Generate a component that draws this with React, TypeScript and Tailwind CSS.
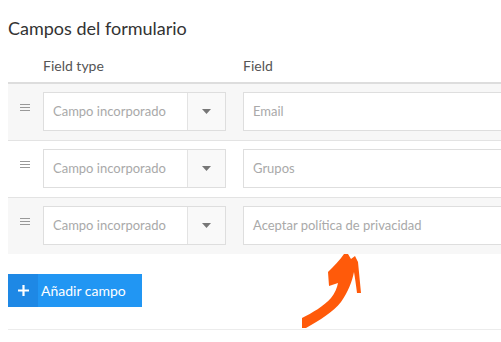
const FONT = { fontFamily: 'Lato, "Noto Sans", sans-serif' };

const rows = [
  { field: "Email", striped: true },
  { field: "Grupos", striped: false },
  { field: "Aceptar política de privacidad", striped: true },
];

function DragHandle() {
  return (
    <div className="flex w-[35px] shrink-0 justify-center pt-[12px] pr-[2px]">
      <div className="flex w-[10px] flex-col gap-[2px]">
        <span className="h-px bg-[#999]" />
        <span className="h-px bg-[#999]" />
        <span className="h-px bg-[#999]" />
      </div>
    </div>
  );
}

function FieldRow({ field, striped, last }: { field: string; striped: boolean; last: boolean }) {
  return (
    <div
      className={`flex pt-[8px] ${striped ? "bg-[#f7f7f7]" : "bg-white"} ${
        last ? "h-[56px]" : "h-[57px] border-b border-[#e3e3e3]"
      }`}
    >
      <DragHandle />
      <div className="flex h-[39px] w-[183px] shrink-0 border border-[#dedede] bg-white">
        <div className="flex flex-1 items-center pl-[9px] text-[13px] text-[#a9a9a9]">
          Campo incorporado
        </div>
        <div className="flex w-[38px] items-center justify-center border-l border-[#e3e3e3] bg-[#f9f9f9]">
          <svg width="9" height="5" viewBox="0 0 9 5">
            <path d="M0 0h9L4.5 5z" fill="#777" />
          </svg>
        </div>
      </div>
      <div className="ml-[17px] flex h-[39px] flex-1 items-center border border-r-0 border-[#dedede] bg-white pl-[9px] text-[13px] text-[#a9a9a9]">
        {field}
      </div>
    </div>
  );
}

export default function App() {
  return (
    <div className="relative h-[342px] w-[501px] overflow-hidden bg-white px-2" style={FONT}>
      <div className="flex h-[48px] items-center pt-[8px] text-[18px] text-[#333]">
        Campos del formulario
      </div>
      <div className="-mr-2 flex h-[36px] items-center border-b-2 border-[#dddddd] text-[14px] text-[#555]">
        <div className="w-[235px] pl-[35px]">Field type</div>
        <div>Field</div>
      </div>
      <div className="-mr-2">
        {rows.map((r, i) => (
          <FieldRow key={r.field} field={r.field} striped={r.striped} last={i === rows.length - 1} />
        ))}
      </div>
      <button
        type="button"
        className="mt-[20px] flex h-[33px] w-[134px] items-stretch bg-[#2196f3] text-[14px] text-white"
      >
        <span className="flex w-[30px] items-center justify-center bg-[#1e88e5]">
          <svg width="11" height="11" viewBox="0 0 11 11">
            <path d="M5.5 0v11M0 5.5h11" stroke="#fff" strokeWidth="2.2" />
          </svg>
        </span>
        <span className="flex items-center pl-[3px]">Añadir campo</span>
      </button>
      <div className="-mr-2 mt-[22px] border-t border-[#ececec]" />

      <svg
        className="pointer-events-none absolute left-0 top-0"
        width="501"
        height="342"
        viewBox="0 0 501 342"
      >
        <path
          d="M302 328 L302 318 C312 313 324 306 331 298 C335 293 337 288 338 283 L329 286 L328 272 C334 266 340 260 344 254 L348 254 L351 259 L355 256 L358 262 C359 272 360 283 361 293 L357 293 C356 285 355 278 354 272 C352 282 348 292 341 302 C333 312 320 320 306 328 Z"
          fill="#ff5a0a"
        />
      </svg>
    </div>
  );
}
